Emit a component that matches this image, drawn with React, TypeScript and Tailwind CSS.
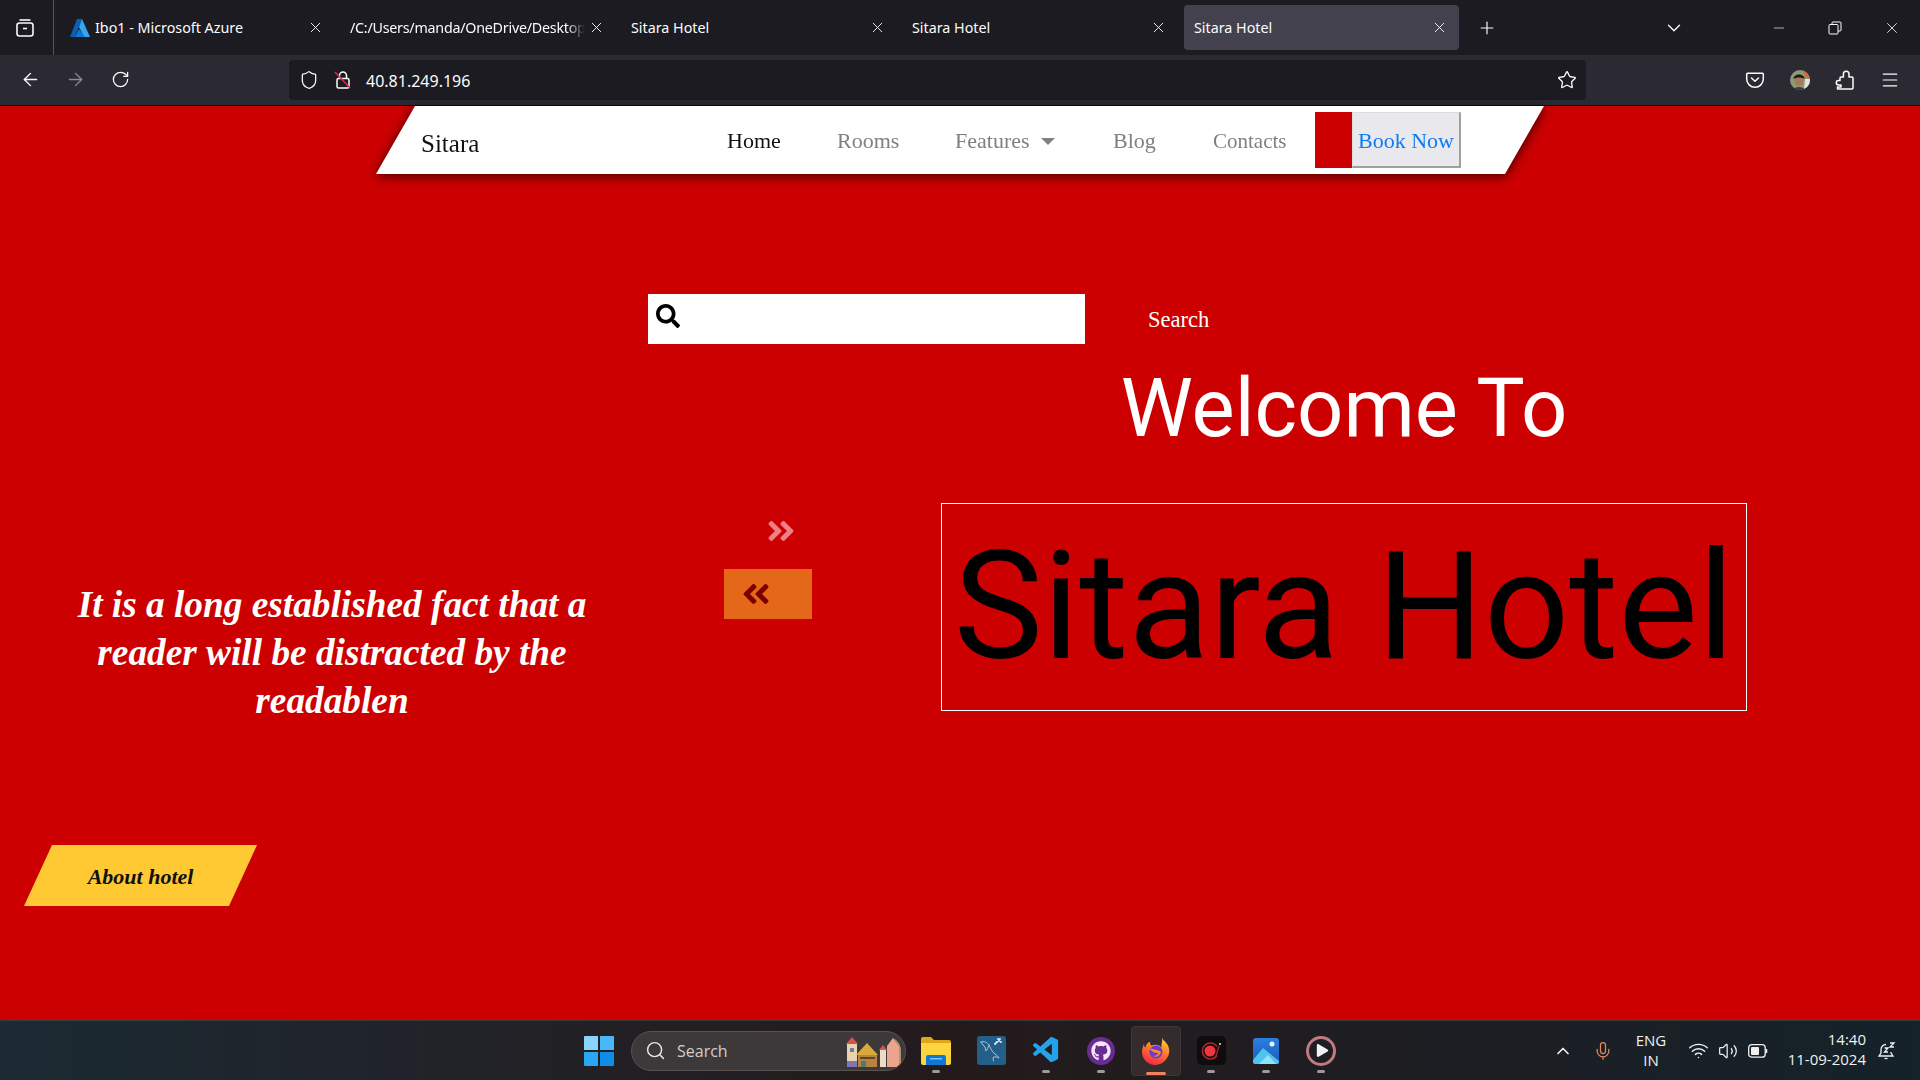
import { ArrowLeft, ArrowRight, ChevronDown, ChevronUp, Menu, Mic, Minus, Plus, RotateCw, Search, Shield, Star, Volume2, Wifi, X } from 'lucide-react';
import { FaAngleDoubleLeft, FaAngleDoubleRight, FaGithub, FaPlay, FaSearch } from 'react-icons/fa';
import { VscVscode } from 'react-icons/vsc';

const tabs = [
	{ title: 'Ibo1 - Microsoft Azure', azure: true },
	{ title: '/C:/Users/manda/OneDrive/Desktop', fade: true },
	{ title: 'Sitara Hotel' },
	{ title: 'Sitara Hotel' },
	{ title: 'Sitara Hotel', active: true },
];

function AzureIcon() {
	return (
		<svg viewBox="0 0 20 20" className="w-[20px] h-[20px] shrink-0 mr-[5px]">
			<path d="M7 1h5L5 19H0z" fill="#0a5fb4" />
			<path d="M12 1l8 18h-6L9 9z" fill="#35a5ee" />
			<path d="M9 11l6 8H5z" fill="#0f78d4" />
		</svg>
	);
}

function Tab({ title, azure, fade, active }: { title: string; azure?: boolean; fade?: boolean; active?: boolean }) {
	return (
		<div className="w-[281px] shrink-0 px-[3px] py-[5px]">
			<div className={`h-[45px] rounded-[4px] pr-[11px] flex items-center ${azure || active ? 'pl-[10px]' : 'pl-[9px]'} ${active ? 'bg-[#42414d]' : ''}`}>
				{azure && <AzureIcon />}
				<span className={`flex-1 text-[14.3px] leading-[20px] whitespace-nowrap overflow-hidden text-[#fbfbfe] ${fade ? 'tracking-[-0.25px] [mask-image:linear-gradient(to_right,black_92%,transparent)]' : ''}`}>{title}</span>
				<X size={17} strokeWidth={1.3} className="text-[#fbfbfe] shrink-0 ml-[3px]" />
			</div>
		</div>
	);
}

function BrowserChrome() {
	return (
		<div className="shrink-0">
			<div className="h-[55px] bg-[#1c1b22] flex items-stretch">
				<div className="w-[54px] border-r border-[#55545c] flex items-center justify-center shrink-0 pr-[4px]">
					<svg viewBox="0 0 20 20" fill="none" stroke="#fbfbfe" strokeWidth="1.6" className="w-[20px] h-[20px]">
						<rect x="2" y="5" width="16" height="13" rx="2.5" />
						<path d="M4.5 2h11" />
						<path d="M8 10.5h4" />
					</svg>
				</div>
				<div className="w-[3px] shrink-0" />
				{tabs.map((t, i) => (
					<Tab key={i} {...t} />
				))}
				<div className="flex items-center ml-[15px]">
					<Plus size={20} strokeWidth={1.4} className="text-[#fbfbfe]" />
				</div>
				<div className="flex items-center ml-[166px]">
					<ChevronDown size={22} strokeWidth={1.5} className="text-[#fbfbfe]" />
				</div>
				<div className="flex items-center ml-[86px]">
					<Minus size={16} strokeWidth={1} className="text-[#fbfbfe]" />
				</div>
				<div className="flex items-center ml-[41px]">
					<svg viewBox="0 0 14 14" fill="none" stroke="#fbfbfe" strokeWidth="1" className="w-[14px] h-[14px]">
						<rect x="1" y="3.5" width="9" height="9.5" rx="1" />
						<path d="M4 3.5V2a1 1 0 0 1 1-1h7a1 1 0 0 1 1 1v7a1 1 0 0 1-1 1h-2" />
					</svg>
				</div>
				<div className="flex items-center ml-[41px]">
					<X size={18} strokeWidth={1.1} className="text-[#fbfbfe]" />
				</div>
			</div>
			<div className="h-[51px] bg-[#2b2a33] border-b border-[#0c0c0d] flex items-center pb-[1px]">
				<ArrowLeft size={21} strokeWidth={1.6} className="text-[#fbfbfe] ml-[20px]" />
				<ArrowRight size={21} strokeWidth={1.6} className="text-[#8a8a90] ml-[24px]" />
				<RotateCw size={19} strokeWidth={1.6} className="text-[#fbfbfe] ml-[25px]" />
				<div className="w-[1297px] h-[40px] ml-[159px] rounded-[4px] bg-[#1c1b22] flex items-center">
					<Shield size={20} strokeWidth={1.5} className="text-[#fbfbfe] ml-[10px]" />
					<svg viewBox="0 0 18 20" fill="none" className="w-[18px] h-[20px] ml-[15px]">
						<rect x="3" y="8.5" width="12" height="9.5" rx="1.5" stroke="#fbfbfe" strokeWidth="1.5" />
						<path d="M5.5 8.5V5.5a3.5 3.500 0 0 1 7 0v3" stroke="#fbfbfe" strokeWidth="1.5" />
						<path d="M1 2l15 16" stroke="#e22850" strokeWidth="1.5" />
					</svg>
					<span className="ml-[14px] pt-[3px] text-[16px] leading-[20px] text-[#fbfbfe]">40.81.249.196</span>
					<Star size={20} strokeWidth={1.6} className="text-[#fbfbfe] ml-auto mr-[9px]" />
				</div>
				<svg viewBox="0 0 20 20" fill="none" stroke="#fbfbfe" strokeWidth="1.5" className="w-[20px] h-[20px] ml-[159px]">
					<path d="M2.5 3.2h15a.8.8 0 0 1 .8.8v5a8.3 8.3 0 0 1-16.6 0V4a.8.8 0 0 1 .8-.8z" />
					<path d="M6.5 8l3.5 3.3L13.500 8" strokeLinecap="round" strokeLinejoin="round" />
				</svg>
				<svg viewBox="0 0 20 20" className="w-[20px] h-[20px] ml-[25px] rounded-full overflow-hidden">
					<rect width="20" height="20" fill="#8c9a78" />
					<path d="M13 0h7v9l-5-2z" fill="#d2683c" />
					<path d="M15 9h5v11h-6z" fill="#dfe7dc" />
					<ellipse cx="9" cy="11" rx="4.500" ry="5" fill="#a97a58" />
					<path d="M3.500 9c0-6 11-6 11 0-3-2-8-2-11 0z" fill="#1d1814" />
					<path d="M3 20c1-4 11-4 12 0z" fill="#3c3a3c" />
				</svg>
				<svg viewBox="0 0 20 20" fill="none" stroke="#fbfbfe" strokeWidth="1.5" strokeLinejoin="round" className="w-[20px] h-[20px] ml-[25px]">
					<path d="M2.500 19H17a1 1 0 0 0 1-1V8a1 1 0 0 0-1-1h-3V4a2.800 2.800 0 0 0-5.600 0v3H6a1 1 0 0 0-1 1v2.500H3.500a2.200 2.200 0 0 0 0 4.400H6V17H2.500z" />
				</svg>
				<Menu size={20} strokeWidth={1.4} className="text-[#fbfbfe] ml-[25px]" />
			</div>
		</div>
	);
}

function NavLink({ children, width, active, size = 'text-[22px]' }: { children: React.ReactNode; width: string; active?: boolean; size?: string }) {
	return <a className={`${width} ${size} shrink-0 leading-none pt-[2px] ${active ? 'text-[#111]' : 'text-[#808080]'}`}>{children}</a>;
}

function Navbar() {
	return (
		<div className="ml-[376px] w-[1168px] drop-shadow-[0_2px_6px_rgba(0,0,0,0.7)]">
			<div className="h-[68px] bg-white [clip-path:polygon(39px_0,100%_0,1129px_100%,0_100%)] flex items-center font-['Liberation_Serif',serif]">
				<span className="ml-[45px] w-[306px] shrink-0 text-[25px] leading-none text-[#111] pt-[6px]">Sitara</span>
				<NavLink width="w-[110px]" active>Home</NavLink>
				<NavLink width="w-[118px]">Rooms</NavLink>
				<div className="w-[158px] shrink-0 flex items-center pt-[2px]">
					<a className="text-[22px] leading-none text-[#808080]">Features</a>
					<span className="ml-[11px] w-0 h-0 border-x-[7px] border-x-transparent border-t-[7px] border-t-[#808080]" />
				</div>
				<NavLink width="w-[100px]">Blog</NavLink>
				<NavLink width="w-[102px]" size="text-[21px]">Contacts</NavLink>
				<div className="w-[37px] h-[56px] bg-[#cc0000] shrink-0" />
				<button className="w-[109px] h-[56px] shrink-0 pt-[3px] bg-[#e9e9ed] border-r-2 border-b-2 border-[#a0a0a0] border-t border-l border-t-[#dcdcdc] border-l-[#dcdcdc] text-[22px] leading-none text-[#0d7bf2] font-['Liberation_Serif',serif]">Book Now</button>
			</div>
		</div>
	);
}

function Hero() {
	return (
		<div className="flex items-start">
			<div className="w-[664px] shrink-0 pt-[237px]">
				<p className="text-center text-white text-[37.3px] leading-[48px] font-bold italic font-['Liberation_Serif',serif]">
					It is a long established fact that a<br />
					reader will be distracted by the<br />
					readablen
				</p>
				<a className="mt-[120px] ml-[24px] w-[233px] h-[61px] bg-[#ffc933] [clip-path:polygon(28px_0,100%_0,205px_100%,0_100%)] flex items-center justify-center pt-[2px] text-[22px] leading-none font-bold italic text-[#111] font-['Liberation_Serif',serif]">About hotel</a>
			</div>
			<div className="w-[277px] shrink-0 pt-[171px]">
				<FaAngleDoubleRight size={32} className="ml-[101px] text-[#f08088]" />
				<div className="ml-[60px] mt-[22px] w-[88px] h-[50px] bg-[#e5681a] flex items-center pl-[16px]">
					<FaAngleDoubleLeft size={32} className="text-[#7a0000]" />
				</div>
			</div>
			<div className="w-[806px] shrink-0">
				<h1 className="h-[159px] pt-[20px] text-center text-white text-[81.3px] leading-[90px] font-['Roboto',sans-serif]">Welcome To</h1>
				<div className="h-[208px] border border-white flex items-center justify-center text-[150px] leading-none text-black whitespace-nowrap font-['Roboto',sans-serif]">Sitara Hotel</div>
			</div>
		</div>
	);
}

function FirefoxLogo() {
	return (
		<svg viewBox="0 0 30 30" className="w-[30px] h-[30px]">
			<defs>
				<linearGradient id="ff" x1="0.7" y1="0" x2="0.3" y2="1">
					<stop offset="0" stopColor="#ffd43a" />
					<stop offset="0.45" stopColor="#ff7a2b" />
					<stop offset="1" stopColor="#f0264a" />
				</linearGradient>
			</defs>
			<path d="M21 1c.5 3 3 4 5 7 3 4 3 10 0 14-3 5-8 7-12 7-7 0-13-6-13-13 0-3 1-6 2-8 0 2 .5 3 1.500 3.500C5 8 7 6 9.500 6c-1 1.500-.5 2.500 1 3.500 2.500-1 7-1.500 10 2-.5-4 1.500-6 .5-10.500z" fill="url(#ff)" />
			<circle cx="15" cy="16" r="6.500" fill="#6b3cc9" />
			<path d="M9 12c2 2 8 1 11 4-1 4-5 6-8 4 3 0 5-1 5-3-3 0-7-1-8-5z" fill="#ff8a2b" />
		</svg>
	);
}

function Dot() {
	return <span className="absolute bottom-[3px] left-1/2 -translate-x-1/2 w-[8px] h-[3px] rounded-full bg-[#9d9a9b]" />;
}

function TaskIcon({ children, dot = true }: { children: React.ReactNode; dot?: boolean }) {
	return (
		<div className="relative w-[50px] ml-[5px] h-[50px] flex items-center justify-center shrink-0">
			{children}
			{dot && <Dot />}
		</div>
	);
}

function Taskbar() {
	return (
		<div className="h-[60px] shrink-0 border-t border-[#3a3a3c] bg-gradient-to-r from-[#1b2a33] via-[#241a1c] to-[#14222a] flex items-center">
			<svg viewBox="0 0 30 30" className="w-[30px] h-[30px] ml-[584px] shrink-0">
				<path d="M0 1a1 1 0 0 1 1-1h13v14H0z" fill="#8bd3fb" />
				<path d="M16 0h13a1 1 0 0 1 1 1v13H16z" fill="#4ab8f8" />
				<path d="M0 16h14v14H1a1 1 0 0 1-1-1z" fill="#2aa6f2" />
				<path d="M16 16h14v13a1 1 0 0 1-1 1H16z" fill="#0f8ce8" />
			</svg>
			<div className="ml-[17px] w-[275px] h-[40px] rounded-full bg-[#3d3839] border border-[#58534f] flex items-center pl-[13px] overflow-hidden shrink-0">
				<Search size={21} strokeWidth={1.7} className="text-[#e4e4e4]" />
				<span className="ml-[11px] text-[16px] leading-[20px] text-[#cfcfcf] font-['Open_Sans',sans-serif]">Search</span>
				<svg viewBox="0 0 60 32" className="w-[60px] h-[32px] ml-auto mr-[3px]">
					<path d="M4 9l6-7 6 7z" fill="#d8544a" />
					<rect x="5" y="9" width="10" height="23" fill="#e9d3b3" />
					<rect x="8" y="13" width="4" height="4" fill="#6a7fa0" />
					<rect x="5" y="26" width="10" height="6" fill="#7c78b8" />
					<path d="M14 20l11-12 11 12z" fill="#d9a93c" />
					<rect x="16" y="20" width="19" height="12" fill="#b9843e" />
					<rect x="18" y="22" width="15" height="2" fill="#5f4425" />
					<rect x="19" y="26" width="5" height="6" fill="#3d8178" />
					<path d="M37 15l4-5 4 5z" fill="#d8544a" />
					<rect x="38" y="15" width="6" height="17" fill="#efdcc6" />
					<path d="M45 11l6-8 6 8v21H45z" fill="#eba58e" />
					<path d="M51 3a13 14 0 0 1 8 14v15h-2V11z" fill="#b19472" />
				</svg>
			</div>
			<div className="relative ml-[5px] w-[50px] h-[50px] flex items-center justify-center shrink-0">
				<svg viewBox="0 0 30 28" className="w-[30px] h-[28px]">
					<path d="M0 2a2 2 0 0 1 2-2h8l3 3h15a2 2 0 0 1 2 2v3H0z" fill="#e0a71c" />
					<path d="M0 6h30v20a2 2 0 0 1-2 2H2a2 2 0 0 1-2-2z" fill="#fcd53f" />
					<path d="M5 20a2 2 0 0 1 2-2h16a2 2 0 0 1 2 2v8H5z" fill="#0f78d4" />
					<rect x="9" y="21" width="12" height="1.500" fill="#7cc4f4" />
				</svg>
				<Dot />
			</div>
			<TaskIcon dot={false}>
				<svg viewBox="0 0 29 29" fill="none" className="w-[29px] h-[29px]">
					<rect width="29" height="29" rx="3" fill="#235f88" />
					<path d="M4 6c3-1 6 0 8 3 2 4 3 7 6 9 1.500 1 3 2 4 4-2-1-4-1.500-5.500-1-.5 1.500-.5 2.500 0 4M12 9c-1 3-2 5-3 6l-1-4-2-2-2-3" stroke="#b7cfe0" strokeWidth="0.900" strokeLinecap="round" strokeLinejoin="round" />
					<path d="M18 8l5-5M21 3l3 3" stroke="#d8e6ef" strokeWidth="1.800" strokeLinecap="round" />
				</svg>
			</TaskIcon>
			<TaskIcon>
				<VscVscode size={31} className="text-[#23a3ea]" />
			</TaskIcon>
			<TaskIcon>
				<div className="w-[28px] h-[28px] rounded-full bg-[#6a2c91] flex items-center justify-center">
					<FaGithub size={20} className="text-[#f2e8f7]" />
				</div>
			</TaskIcon>
			<div className="relative w-[50px] ml-[5px] h-[50px] rounded-[4px] bg-[#332b2c] border border-[#3e3637] flex items-center justify-center shrink-0">
				<FirefoxLogo />
				<span className="absolute bottom-[0px] left-1/2 -translate-x-1/2 w-[20px] h-[3px] rounded-full bg-[#f08060]" />
			</div>
			<TaskIcon>
				<svg viewBox="0 0 29 29" fill="none" className="w-[29px] h-[29px]">
					<rect width="29" height="29" rx="5" fill="#0d0d0d" />
					<circle cx="13" cy="15" r="5.500" fill="#ee3540" />
					<path d="M20 10.500a8 8 0 1 0 0 9" stroke="#b3262c" strokeWidth="1.600" />
					<path d="M19 20l3-10" stroke="#b3262c" strokeWidth="1.200" />
					<circle cx="23" cy="8" r="1" fill="#e9e9e9" />
				</svg>
			</TaskIcon>
			<TaskIcon>
				<svg viewBox="0 0 26 26" className="w-[26px] h-[26px]">
					<defs>
						<linearGradient id="ph" x1="0" y1="0" x2="0" y2="1">
							<stop offset="0" stopColor="#2b7fe0" />
							<stop offset="1" stopColor="#1c58b8" />
						</linearGradient>
					</defs>
					<rect width="26" height="26" rx="3" fill="url(#ph)" />
					<circle cx="19" cy="6" r="2.500" fill="#e8f2fc" />
					<path d="M0 22l10-12 16 13v1a2 2 0 0 1-2 2H2a2 2 0 0 1-2-2z" fill="#4fc4ef" />
					<path d="M6 26l9-9 8 9z" fill="#8fe3f7" />
				</svg>
			</TaskIcon>
			<TaskIcon>
				<div className="w-[30px] h-[30px] rounded-full border-[3px] border-[#c07a80] flex items-center justify-center">
					<FaPlay size={13} className="text-[#f2f2f2] ml-[2px]" />
				</div>
			</TaskIcon>
			<ChevronUp size={20} strokeWidth={2} className="text-[#f0f0f0] ml-[207px] shrink-0" />
			<Mic size={20} strokeWidth={1.5} className="text-[#df8a62] ml-[20px] shrink-0" />
			<div className="ml-[20px] w-[36px] text-center text-[15px] leading-[20px] text-[#f0f0f0] shrink-0 pb-[2px] font-['Open_Sans',sans-serif]">ENG<br />IN</div>
			<Wifi size={21} strokeWidth={1.7} className="text-[#f0f0f0] ml-[19px] shrink-0" />
			<Volume2 size={20} strokeWidth={1.5} className="text-[#f0f0f0] ml-[9px] shrink-0" />
			<svg viewBox="0 0 20 14" fill="none" className="w-[20px] h-[14px] ml-[10px] shrink-0">
				<rect x="0.700" y="0.700" width="16.500" height="12.500" rx="3" stroke="#f0f0f0" strokeWidth="1.300" />
				<rect x="3" y="3" width="8" height="8" rx="1" fill="#f0f0f0" />
				<path d="M18.500 5v4" stroke="#f0f0f0" strokeWidth="1.500" />
			</svg>
			<div className="ml-[10px] w-[88px] text-right text-[15px] leading-[20px] text-[#f0f0f0] shrink-0 pb-[4px] font-['Open_Sans',sans-serif]">14:40<br />11-09-2024</div>
			<svg viewBox="0 0 20 20" fill="none" stroke="#f0f0f0" strokeWidth="1.300" className="w-[20px] h-[20px] ml-[11px] shrink-0">
				<path d="M9 3.500a5 5 0 0 0-5 5v3.500l-2 3h14l-2-3V11" />
				<path d="M7.500 17.500h3" />
				<path d="M7.500 7h3.500l-3.500 4h3.500M13 2h4l-4 4h4" />
			</svg>
		</div>
	);
}

export default function App() {
	return (
		<div className="w-[1920px] h-[1080px] overflow-hidden flex flex-col bg-[#cc0000] font-['Noto_Sans',sans-serif]">
			<BrowserChrome />
			<main className="flex-1">
				<Navbar />
				<div className="mt-[120px] ml-[648px] flex items-center">
					<div className="w-[437px] h-[50px] bg-white flex items-start pl-[8px] pt-[10px]">
						<FaSearch size={24} className="text-black" />
					</div>
					<span className="ml-[63px] pt-[2px] text-[22.5px] leading-none text-white font-['Liberation_Serif',serif]">Search</span>
				</div>
				<Hero />
			</main>
			<Taskbar />
		</div>
	);
}
